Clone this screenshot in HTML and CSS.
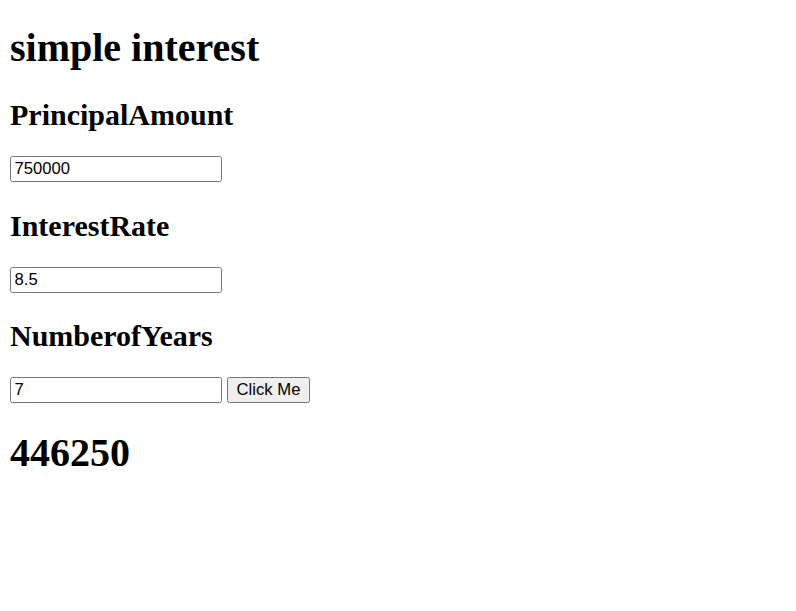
FILE: index.html
```html
<!DOCTYPE html>
<html>
<head>
<meta charset="utf-8">
<title>simple interest</title>
<link rel="stylesheet" href="styles.css">
</head>
<body>
<h1 class="title">simple interest</h1>
<h2 class="label">PrincipalAmount</h2>
<div class="row"><input class="field" type="text" value="750000"></div>
<h2 class="label">InterestRate</h2>
<div class="row"><input class="field" type="text" value="8.5"></div>
<h2 class="label">NumberofYears</h2>
<div class="row"><input class="field" type="text" value="7"><button class="btn" type="button">Click Me</button></div>
<h1 class="result">446250</h1>
</body>
</html>
```
FILE: styles.css
```css
html, body {
  background: #ffffff;
}
body {
  margin: 0 10px;
  font-family: "Liberation Serif", "Times New Roman", serif;
  font-size: 20px;
  color: #000000;
}
.title, .result {
  font-size: 40px;
  font-weight: bold;
  line-height: 46px;
  margin: 27px 0;
}
.title {
  margin-top: 25px;
}
.label {
  font-size: 30px;
  font-weight: bold;
  line-height: 34.5px;
  margin: 26.5px 0 23.5px;
}
.row {
  display: flex;
  align-items: center;
  gap: 5px;
  height: 26px;
}
.field {
  box-sizing: border-box;
  width: 212px;
  height: 26px;
  margin: 0;
  padding: 1px 3.5px;
  border: 1px solid #767676;
  border-radius: 2.5px;
  font-family: "Liberation Sans", Arial, sans-serif;
  font-size: 16.67px;
  color: #000000;
  background: #ffffff;
}
.btn {
  box-sizing: border-box;
  height: 26px;
  width: 83px;
  margin: 0;
  padding: 1px 7.5px;
  border: 1px solid #767676;
  border-radius: 2.5px;
  background: #efefef;
  font-family: "Liberation Sans", Arial, sans-serif;
  font-size: 16.67px;
  color: #000000;
}
```
